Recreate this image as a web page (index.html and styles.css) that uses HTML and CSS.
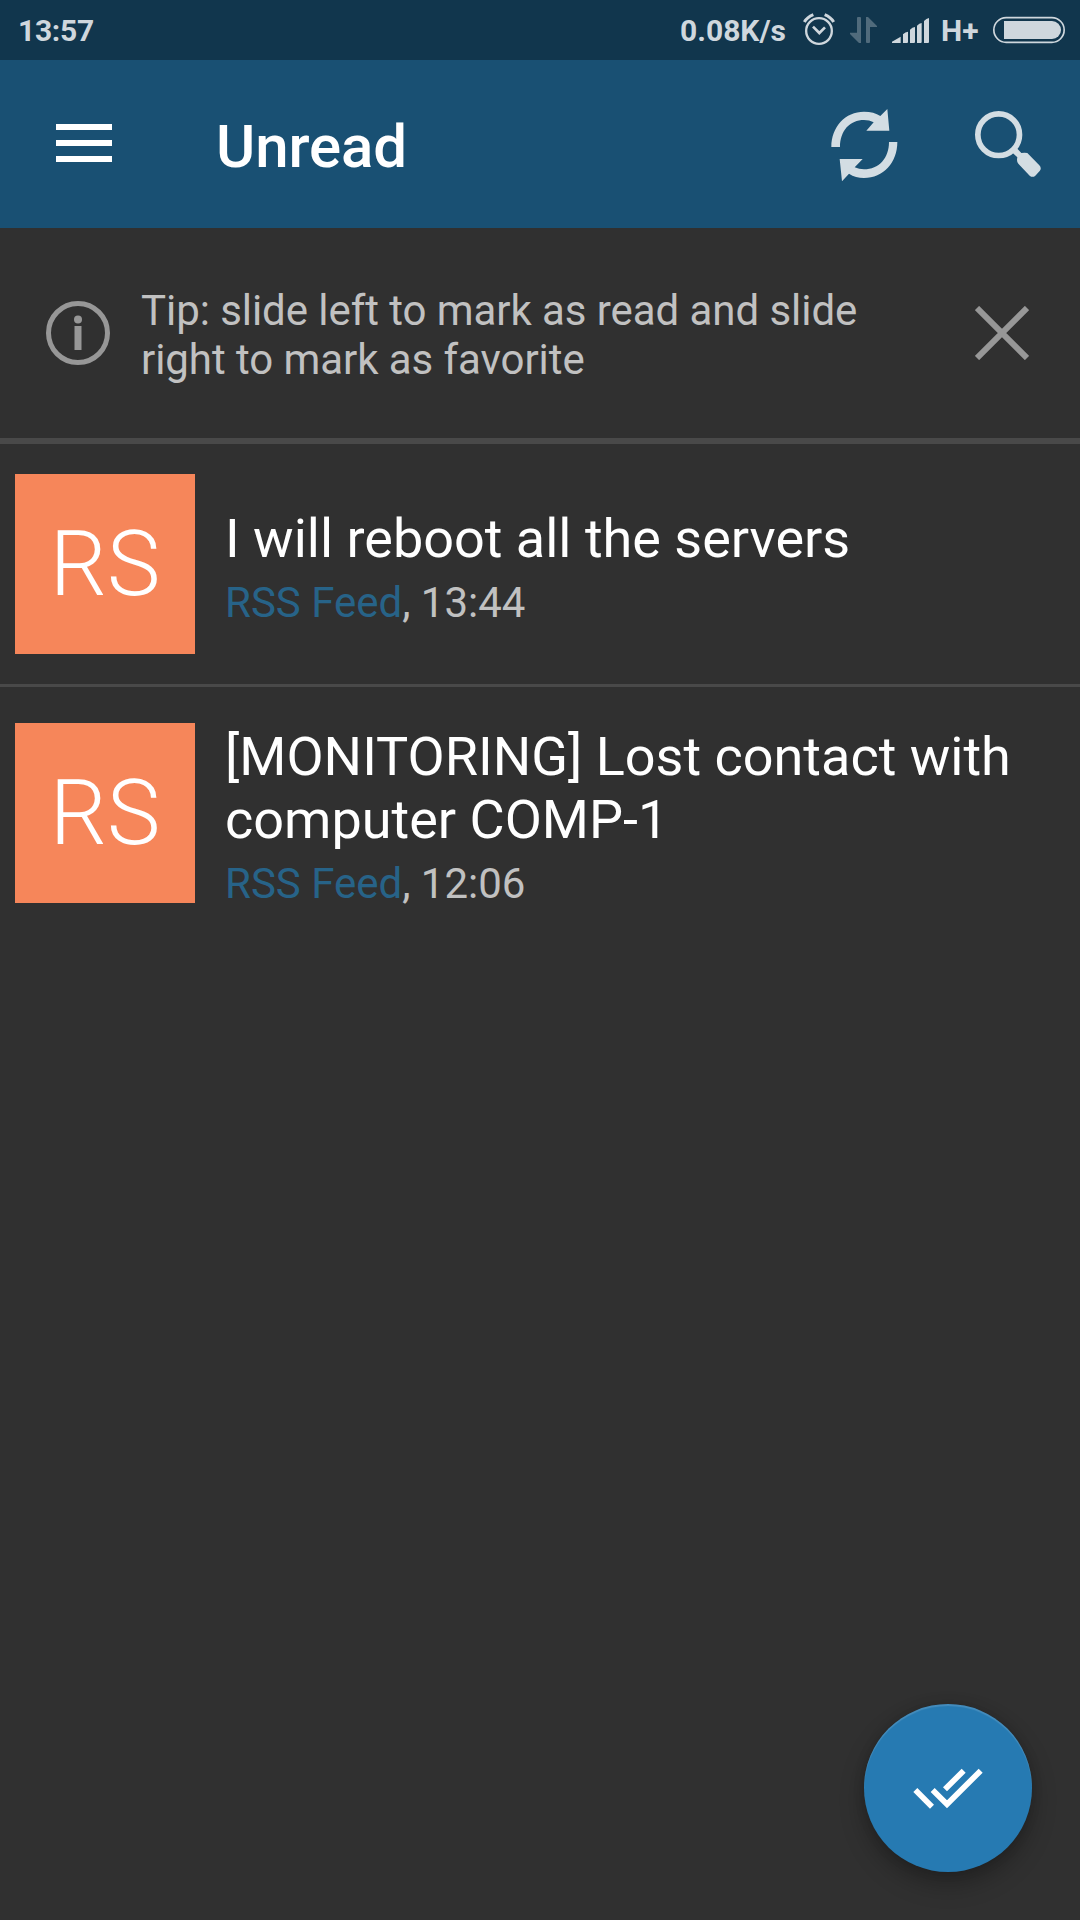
FILE: index.html
```html
<!DOCTYPE html>
<html lang="en">
<head>
<meta charset="utf-8">
<title>Unread</title>
<link rel="stylesheet" href="styles.css">
</head>
<body>
<div class="screen">
  <div class="status-bar">
    <span class="clock">13:57</span>
    <div class="status-icons">
      <span class="net-speed">0.08K/s</span>
      <svg class="icon-alarm" viewBox="426 0 102 180"><g fill="none" stroke="currentColor"><circle cx="477" cy="93" r="38.5" stroke-width="7"/><path d="M459 80l19 19 17-17" stroke-width="8"/><path d="M433 66q8-14 27-22M521 66q-8-14-27-22" stroke-width="9"/></g></svg>
      <svg class="icon-data" viewBox="567 0 87 180"><path fill="currentColor" d="M603 129V54q0-3-3-3h-6q-3 0-3 3v44h-21v4l27 27zM618 51v75q0 3 3 3h6q3 0 3-3V81h21v-3l-27-27z"/></svg>
      <svg class="icon-signal" viewBox="693 0 117 180"><path fill="currentColor" d="M696 129v-4l26-15v19zM729 129v-26q7-7 15-8v31q0 3-3 3zM750 129V89q7-7 15-8v45q0 3-3 3zM771 129V77q7-7 14-8v57q0 3-3 3zM792 129V63q7-7 15-9v72q0 3-3 3z"/></svg>
      <span class="net-type">H+</span>
      <svg class="icon-battery" viewBox="996 0 222 180"><rect x="1001.500" y="53" width="211" height="74" rx="37" fill="none" stroke="currentColor" stroke-width="5"/><path fill="currentColor" d="M1032 63h144a27 27 0 0 1 0 54h-144z"/></svg>
    </div>
  </div>

  <header class="app-bar">
    <svg class="icon-menu" viewBox="0 0 56 38"><path fill="currentColor" d="M0 0h56v6H0zM0 16h56v6H0zM0 32h56v6H0z"/></svg>
    <h1 class="app-title">Unread</h1>
    <svg class="icon-refresh" viewBox="90 72 210 240"><path fill="currentColor" d="M94 201C94 140 136 95 192 95Q222 95 241 108L262 87 268 152H199L221 127Q208 120 192 120C150 120 120 152 120 201ZM292 186C292 248 250 294 192 294Q167 294 147 281L126 304 119 237H188L164 262Q177 268 192 268C237 268 267 234 267 186Z"/></svg>
    <svg class="icon-search" viewBox="519 72 210 240"><circle cx="596" cy="164" r="62.500" fill="none" stroke="currentColor" stroke-width="17"/><path fill="currentColor" d="M634 215l14-13 16 17q10-2 18 0l36 37q8 9 1 17l-13 14q-8 7-17 0l-34-36q-6-6-3-19z"/></svg>
  </header>

  <section class="tip">
    <svg class="icon-info" viewBox="0 0 64 64"><circle cx="32" cy="32" r="29.500" fill="none" stroke="currentColor" stroke-width="5"/><circle cx="32" cy="18.500" r="4" fill="currentColor"/><path fill="currentColor" d="M28.500 25h7v24h-7z"/></svg>
    <p class="tip-text">Tip: slide left to mark as read and slide<br>right to mark as favorite</p>
    <svg class="icon-close" viewBox="0 0 54 54"><path d="M2 2l50 50M52 2L2 52" stroke="currentColor" stroke-width="6"/></svg>
  </section>

  <main class="list">
    <article class="item">
      <div class="avatar">RS</div>
      <div class="item-body">
        <h2 class="item-title">I will reboot all the servers</h2>
        <p class="item-meta"><span class="source">RSS Feed</span>, 13:44</p>
      </div>
    </article>
    <article class="item">
      <div class="avatar">RS</div>
      <div class="item-body">
        <h2 class="item-title">[MONITORING] Lost contact with<br>computer COMP-1</h2>
        <p class="item-meta"><span class="source">RSS Feed</span>, 12:06</p>
      </div>
    </article>
  </main>

  <button class="fab" aria-label="Mark all as read">
    <svg class="icon-done-all" viewBox="216 258 216 132"><path fill="none" stroke="#fff" stroke-width="17" d="M226 330l50 50M371 272l-56 56M278 330l43 43L422 272"/></svg>
  </button>
</div>
</body>
</html>
```

FILE: styles.css
```css
* { box-sizing: border-box; }

body {
  margin: 0;
  background: #303030;
  font-family: Roboto, sans-serif;
}

h1, h2, p { margin: 0; font-weight: 400; }

svg { display: block; flex: none; }

.screen {
  position: relative;
  width: 1080px;
  height: 1920px;
  overflow: hidden;
  background: #303030;
}

.status-bar {
  display: flex;
  justify-content: space-between;
  height: 60px;
  padding: 0 14px 0 18px;
  background: #11364d;
  color: #cfd7dd;
  font-size: 30px;
  font-weight: 700;
  line-height: 61px;
}

.clock { letter-spacing: -.3px; }
.status-icons { display: flex; }
.status-icons svg { height: 60px; }
.net-speed { width: 122px; white-space: nowrap; }
.icon-alarm { width: 34px; }
.icon-data { width: 29px; margin-left: 13px; opacity: .33; }
.icon-signal { width: 39px; margin-left: 13px; }
.net-type { width: 51px; margin-left: 11px; }
.icon-battery { width: 74px; }

.app-bar {
  display: flex;
  align-items: center;
  height: 168px;
  padding: 0 37px 0 56px;
  background: #195073;
  color: #fff;
}

.icon-menu { width: 56px; height: 38px; margin-bottom: 2px; }

.app-title {
  flex: 1;
  margin-left: 104px;
  padding-top: 5px;
  font-size: 60px;
  font-weight: 500;
  line-height: 70px;
  letter-spacing: -.1px;
}

.icon-refresh, .icon-search { width: 70px; height: 80px; color: #d3dde3; }
.icon-search { margin-left: 73px; }

.tip {
  display: flex;
  align-items: center;
  height: 216px;
  padding: 0 51px 0 46px;
  border-bottom: 6px solid #494949;
  color: #c1c1c1;
}

.icon-info { width: 64px; height: 64px; color: #979797; }

.tip-text {
  flex: 1;
  margin-left: 31px;
  padding-top: 4px;
  font-size: 42px;
  line-height: 49px;
  letter-spacing: -.06px;
}

.icon-close { width: 54px; height: 54px; color: #979797; }

.item {
  display: flex;
  align-items: center;
  height: 243px;
  padding: 0 15px;
  border-bottom: 3px solid #494949;
}

.item:last-child { height: 252px; border-bottom: 0; }

.avatar {
  width: 180px;
  height: 180px;
  flex: none;
  background: #f6865a;
  color: #fff;
  font-size: 90px;
  font-weight: 300;
  line-height: 182px;
  text-align: center;
}

.item-body { margin-left: 30px; padding-top: 6px; }

.item-title {
  color: #fff;
  font-size: 54px;
  line-height: 63px;
  white-space: nowrap;
}

.item-meta {
  margin-top: 8px;
  color: #c1c1c1;
  font-size: 42px;
  line-height: 49px;
}

.source { color: #276388; }

.fab {
  position: absolute;
  right: 48px;
  bottom: 48px;
  display: flex;
  align-items: center;
  justify-content: center;
  width: 168px;
  height: 168px;
  padding: 0;
  border: 0;
  border-radius: 50%;
  background: #267ab2;
  box-shadow: 0 12px 24px rgba(0, 0, 0, .28), 0 0 12px rgba(0, 0, 0, .12), inset 0 2px 1px rgba(255, 255, 255, .14);
}

.icon-done-all { width: 72px; height: 44px; }
```
